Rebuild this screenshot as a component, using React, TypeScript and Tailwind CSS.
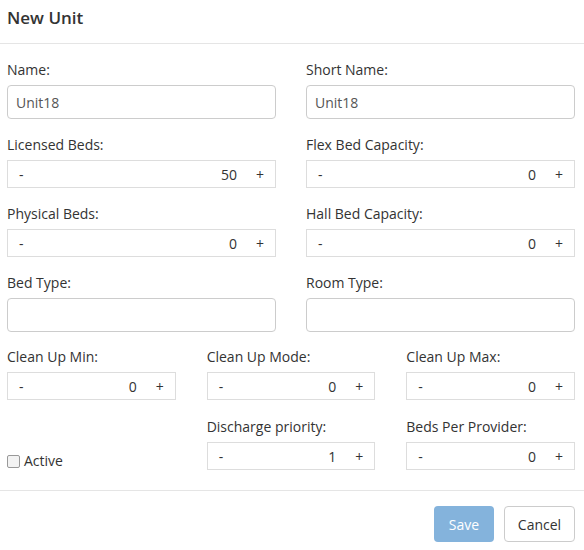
import React from "react";

function Spinner({ value }: { value: string }) {
  return (
    <div className="flex h-[28px] items-center border border-[#dddddd] bg-white text-[14px] text-[#333]">
      <span className="w-[30px] pl-[11px]">-</span>
      <span className="flex-1 pr-[8px] text-right">{value}</span>
      <span className="w-[30px] text-center">+</span>
    </div>
  );
}

function Field({ label, children }: { label: string; children: React.ReactNode }) {
  return (
    <div className="flex flex-col">
      <label className="mb-[5px] h-[20px] text-[14px] leading-[20px] text-[#333]">{label}</label>
      {children}
    </div>
  );
}

function TextInput({ value }: { value: string }) {
  return (
    <div className="flex h-[34px] items-center rounded-[4px] border border-[#cccccc] bg-white px-[8px] text-[14px] text-[#555]">
      {value}
    </div>
  );
}

export default function App() {
  return (
    <div className="w-[584px] h-[550px] bg-white text-[#333]" style={{ fontFamily: '"Open Sans", sans-serif' }}>
      <div className="h-[44px] border-b border-[#e5e5e5] px-[7px] pt-[6px]">
        <h4 className="text-[17px] font-semibold leading-[24px] text-[#333]">New Unit</h4>
      </div>
      <div className="pl-[7px] pr-[9px] pt-[16px]">
        <div className="grid grid-cols-2 gap-x-[30px] gap-y-[16px]">
          <Field label="Name:"><TextInput value="Unit18" /></Field>
          <Field label="Short Name:"><TextInput value="Unit18" /></Field>
          <Field label="Licensed Beds:"><Spinner value="50" /></Field>
          <Field label="Flex Bed Capacity:"><Spinner value="0" /></Field>
          <Field label="Physical Beds:"><Spinner value="0" /></Field>
          <Field label="Hall Bed Capacity:"><Spinner value="0" /></Field>
          <Field label="Bed Type:"><TextInput value="" /></Field>
          <Field label="Room Type:"><TextInput value="" /></Field>
        </div>
        <div className="mt-[15px] grid grid-cols-3 gap-x-[31px] gap-y-[17px]">
          <Field label="Clean Up Min:"><Spinner value="0" /></Field>
          <Field label="Clean Up Mode:"><Spinner value="0" /></Field>
          <Field label="Clean Up Max:"><Spinner value="0" /></Field>
          <div className="flex items-end">
            <label className="flex items-center gap-[4px] text-[14px] leading-[18px]">
              <span className="inline-block h-[13px] w-[13px] rounded-[2px] border border-[#999] bg-[#f3f3f3]"></span>
              Active
            </label>
          </div>
          <Field label="Discharge priority:"><Spinner value="1" /></Field>
          <Field label="Beds Per Provider:"><Spinner value="0" /></Field>
        </div>
      </div>
      <div className="mt-[20px] flex justify-end gap-[10px] border-t border-[#e5e5e5] px-[9px] pt-[15px]">
        <button className="h-[36px] w-[60px] rounded-[4px] bg-[#84b3dc] text-[14px] text-white">Save</button>
        <button className="h-[36px] w-[71px] rounded-[4px] border border-[#cccccc] bg-white text-[14px] text-[#333]">Cancel</button>
      </div>
    </div>
  );
}
